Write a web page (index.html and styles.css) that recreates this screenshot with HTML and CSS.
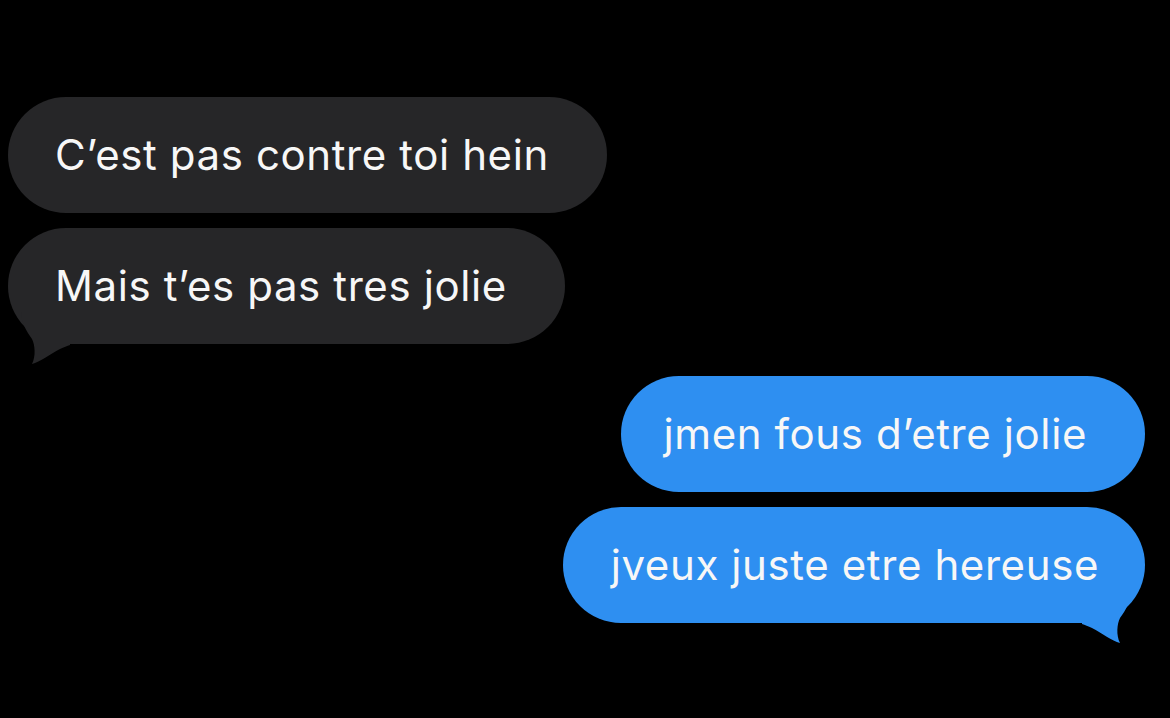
FILE: index.html
```html
<!DOCTYPE html>
<html lang="fr">
<head>
<meta charset="utf-8">
<title>Messages</title>
<link rel="stylesheet" href="styles.css">
</head>
<body>
<main class="chat">
  <section class="group group-in">
    <div class="bubble in">C’est pas contre toi hein</div>
    <div class="bubble in tailed">Mais t’es pas tres jolie
      <svg class="tail tail-in" width="60" height="55" viewBox="0 0 60 55"><path d="M48 0 C50 8 44 19 38 27 C35 33 34 44 38 52 C30 50 20 42 10 37 C6 35 3 34 0 33 L0 0 Z"/></svg>
    </div>
  </section>
  <section class="group group-out">
    <div class="bubble out b-first">jmen fous d’etre jolie</div>
    <div class="bubble out tailed">jveux juste etre hereuse
      <svg class="tail tail-out" width="60" height="55" viewBox="0 0 60 55"><path d="M48 0 C50 8 44 19 38 27 C35 33 34 44 38 52 C30 50 20 42 10 37 C6 35 3 34 0 33 L0 0 Z"/></svg>
    </div>
  </section>
</main>
</body>
</html>
```

FILE: styles.css
```css
html, body {
  margin: 0;
  padding: 0;
  background: #000;
  height: 100%;
}

body {
  font-family: Inter, "Liberation Sans", Arial, sans-serif;
  color: #f7f7f7;
  overflow: hidden;
}

.chat {
  display: flex;
  flex-direction: column;
  gap: 32px;
  padding: 97px 25px 0 8px;
}

.group {
  display: flex;
  flex-direction: column;
  gap: 15px;
}

.group-in {
  align-items: flex-start;
}

.group-out {
  align-items: flex-end;
}

.bubble {
  position: relative;
  height: 116px;
  box-sizing: border-box;
  display: flex;
  align-items: center;
  border-radius: 58px;
  font-size: 42px;
  letter-spacing: 0.6px;
  white-space: nowrap;
}

.in {
  background: #262628;
  padding: 0 58px 2px 47px;
}

.out {
  background: #2e8ff1;
  padding: 0 46px 2px 48px;
}

.b-first {
  padding-left: 43px;
  padding-right: 58px;
}

.tail {
  position: absolute;
  top: 84px;
  display: block;
}

.tail-in {
  left: 2px;
  transform: scaleX(-1);
}

.tail-in path {
  fill: #262628;
}

.tail-out {
  right: 3px;
}

.tail-out path {
  fill: #2e8ff1;
}
```
